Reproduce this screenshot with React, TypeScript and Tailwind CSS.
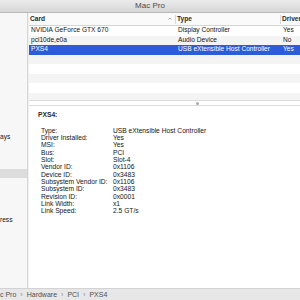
import React from 'react';

type Row = { card: string; type: string; driver: string; selected?: boolean };

const rows: Row[] = [
  { card: 'NVIDIA GeForce GTX 670', type: 'Display Controller', driver: 'Yes' },
  { card: 'pci10de,e0a', type: 'Audio Device', driver: 'No' },
  { card: 'PXS4', type: 'USB eXtensible Host Controller', driver: 'Yes', selected: true },
  { card: '', type: '', driver: '' },
  { card: '', type: '', driver: '' },
  { card: '', type: '', driver: '' },
  { card: '', type: '', driver: '' },
  { card: '', type: '', driver: '' },
];

const details: [string, string][] = [
  ['Type:', 'USB eXtensible Host Controller'],
  ['Driver Installed:', 'Yes'],
  ['MSI:', 'Yes'],
  ['Bus:', 'PCI'],
  ['Slot:', 'Slot-4'],
  ['Vendor ID:', '0x1106'],
  ['Device ID:', '0x3483'],
  ['Subsystem Vendor ID:', '0x1106'],
  ['Subsystem ID:', '0x3483'],
  ['Revision ID:', '0x0001'],
  ['Link Width:', 'x1'],
  ['Link Speed:', '2.5 GT/s'],
];

const App: React.FC = () => (
  <div className="w-[300px] h-[300px] flex flex-col overflow-hidden bg-white font-['Liberation_Sans',Arial,sans-serif] text-[#141414]">
    {/* title bar */}
    <div className="h-[13px] shrink-0 flex items-center justify-center bg-gradient-to-b from-[#ececec] to-[#d6d6d6] border-b border-[#b9b9b9] text-[8px] leading-none text-[#4a4a4a]">
      Mac Pro
    </div>

    <div className="flex-1 flex min-h-0">
      {/* sidebar */}
      <div className="w-[28px] shrink-0 flex flex-col bg-[#f7f7f7] border-r border-[#d6d6d6] text-[6.6px] leading-none overflow-hidden">
        <div className="h-[120px] shrink-0" />
        <div className="h-[9px] shrink-0 flex items-center">ays</div>
        <div className="h-[27px] shrink-0" />
        <div className="h-[9px] shrink-0 bg-[#dcdcdc]" />
        <div className="h-[38px] shrink-0" />
        <div className="h-[9px] shrink-0 flex items-center">ress</div>
      </div>

      {/* main */}
      <div className="flex-1 flex flex-col min-w-0 border-l border-[#efefef]">
        <div className="h-[87px] shrink-0 flex flex-col overflow-hidden">
          <div className="h-[13px] shrink-0 flex items-center bg-[#fafafa] border-b border-[#d4d4d4] text-[6.6px] leading-none font-bold text-[#2a2a2a]">
            <div className="w-[146px] shrink-0 flex items-center justify-between pl-[1px] pr-[3px]">
              <span>Card</span>
              <svg width="4" height="3" viewBox="0 0 4 3" className="mt-[-1px]">
                <path d="M0.5 2.5 L2 1 L3.5 2.5" fill="none" stroke="#8a8a8a" strokeWidth="0.7" />
              </svg>
            </div>
            <div className="w-px h-[9px] bg-[#d8d8d8] shrink-0" />
            <div className="w-[104px] shrink-0 pl-[1px]">Type</div>
            <div className="w-px h-[9px] bg-[#d8d8d8] shrink-0" />
            <div className="pl-[1px] whitespace-nowrap">Driver</div>
          </div>
          {rows.map((r, i) => (
            <div
              key={i}
              className={
                'h-[9.5px] shrink-0 flex items-center text-[6.6px] leading-none whitespace-nowrap ' +
                (r.selected ? 'bg-[#2b5dd8] text-white' : i % 2 === 1 ? 'bg-[#f4f4f5]' : 'bg-white')
              }
            >
              <div className="w-[147px] shrink-0 pl-[2px]">{r.card}</div>
              <div className="w-[105px] shrink-0 pl-[2px]">{r.type}</div>
              <div className="pl-[2px]">{r.driver}</div>
            </div>
          ))}
        </div>

        {/* split divider */}
        <div className="h-[6px] shrink-0 flex items-center bg-white border-t border-b border-[#dcdcdc]">
          <div className="ml-[167px] w-[3px] h-[3px] rounded-full bg-[#a9a9a9]" />
        </div>

        {/* detail pane */}
        <div className="flex-1 flex flex-col pt-[5px] pl-[9px] text-[6.7px] leading-none min-h-0">
          <div className="h-[8px] flex items-center font-bold text-[#2a2a2a]">PXS4:</div>
          <div className="mt-[8.3px] pl-[3px] grid grid-cols-[72px_auto] auto-rows-[7.35px] items-center">
            {details.map(([k, v]) => (
              <React.Fragment key={k}>
                <div className="whitespace-nowrap">{k}</div>
                <div className="whitespace-nowrap">{v}</div>
              </React.Fragment>
            ))}
          </div>
        </div>
      </div>
    </div>

    {/* path bar */}
    <div className="h-[12px] shrink-0 flex items-center gap-[4px] bg-[#e7e7e7] border-t border-[#d2d2d2] text-[7px] leading-none text-[#4f4f4f] whitespace-nowrap">
      <span>c Pro</span>
      <span className="text-[#8a8a8a]">›</span>
      <span>Hardware</span>
      <span className="text-[#8a8a8a]">›</span>
      <span>PCI</span>
      <span className="text-[#8a8a8a]">›</span>
      <span>PXS4</span>
    </div>
  </div>
);

export default App;
